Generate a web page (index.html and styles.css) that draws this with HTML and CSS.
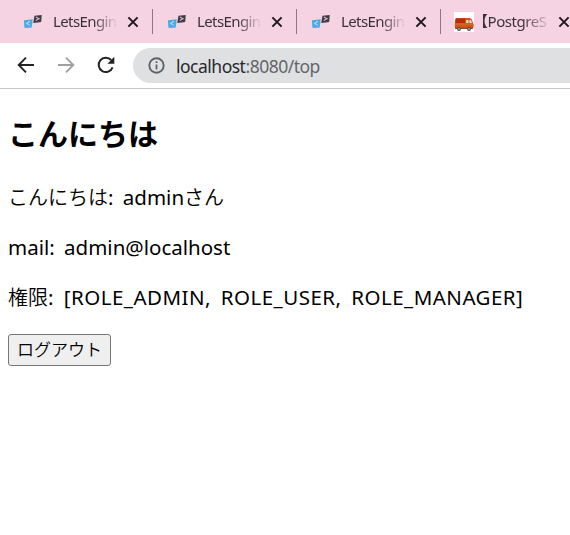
FILE: index.html
```html
<!DOCTYPE html>
<html lang="ja">
<head>
<meta charset="utf-8">
<title>こんにちは</title>
<link rel="stylesheet" href="styles.css">
</head>
<body>
<svg width="0" height="0" class="defs">
  <symbol id="fav" viewBox="0 0 18 14">
    <path d="M0 5.2 8.7 4.2 7.7 12.4 1.6 13Q.3 13 .3 11.7Z" fill="#49a9e6"/>
    <path d="M5.8 6.2 2.8 8.5 5.8 10.4" fill="none" stroke="#b5dffa" stroke-width="1.1"/>
    <path d="M10.5.7 17.7 0 17.3 6.2Q17.2 7.2 16 7.3L9.2 8Z" fill="#453b44"/>
    <path d="M12 2 15 3.7 11.8 5.4" fill="none" stroke="#c9bcc6" stroke-width="1.1"/>
  </symbol>
  <symbol id="close" viewBox="0 0 12 12">
    <path d="M1.4 1.4 10.6 10.6M10.6 1.4 1.4 10.6" stroke="#1d191c" stroke-width="2"/>
  </symbol>
</svg>
<div class="tabs">
  <div class="tab"><svg class="fav"><use href="#fav"/></svg><span class="title"><span class="t-eng">LetsEngin</span></span><svg class="close"><use href="#close"/></svg></div>
  <div class="tab"><svg class="fav"><use href="#fav"/></svg><span class="title"><span class="t-eng">LetsEngin</span></span><svg class="close"><use href="#close"/></svg></div>
  <div class="tab"><svg class="fav"><use href="#fav"/></svg><span class="title"><span class="t-eng">LetsEngin</span></span><svg class="close"><use href="#close"/></svg></div>
  <div class="tab last">
    <svg class="van" viewBox="0 0 20 20"><rect width="20" height="20" fill="#fff"/><path d="M1 8Q1 6 3 6H15.5Q17.4 6 18 8L19 11Q20 12 19.6 15.5L18 16.8H1.5L.6 15Z" fill="#cf541f"/><path d="M2 6.6H11V11H1.5Z" fill="#bd2a0b"/><path d="M12.2 8H14.5V11H12.2ZM15.5 8H17L18 11H15.5Z" fill="#f4dfcd"/><path d="M.7 12.2H19.5" stroke="#d8702b"/><path d="M1 16.3H19" stroke="#83421b"/><circle cx="5" cy="17" r="2" fill="#5b4b48"/><circle cx="15" cy="17" r="2" fill="#5b4b48"/><circle cx="5" cy="17" r=".8" fill="#ddd"/><circle cx="15" cy="17" r=".8" fill="#ddd"/></svg>
    <span class="title wide"><span class="t-pg">【PostgreS</span></span><svg class="close"><use href="#close"/></svg>
  </div>
</div>
<div class="toolbar">
  <svg class="nav" viewBox="0 0 18 18"><path d="M17 9H2M9 1.7 1.7 9 9 16.3" fill="none" stroke="#222" stroke-width="1.9"/></svg>
  <svg class="nav" viewBox="0 0 18 18"><path d="M1 9H16M9 1.7 16.3 9 9 16.3" fill="none" stroke="#a0a0a0" stroke-width="1.9"/></svg>
  <svg class="nav" viewBox="0 0 18 18"><path d="M15.6 11.4A7.2 7.2 0 1 1 14.2 4" fill="none" stroke="#222" stroke-width="2"/><path d="M17.3.8V7.7H10.4Z" fill="#222"/></svg>
  <div class="omnibox">
    <svg class="info" viewBox="0 0 17 17"><circle cx="8.5" cy="8.5" r="7.2" fill="none" stroke="#5f6368" stroke-width="1.9"/><path d="M8.5 7.4V12.6M8.5 4.3V6.1" stroke="#5f6368" stroke-width="1.8"/></svg>
    <span class="url"><span class="host">localhost</span>:8080/top</span>
  </div>
</div>
<main>
  <h1>こんにちは</h1>
  <p>こんにちは<span class="latin">: admin</span>さん</p>
  <p><span class="latin">mail: admin@localhost</span></p>
  <p>権限<span class="latin roles">: [ROLE_ADMIN, ROLE_USER, ROLE_MANAGER]</span></p>
  <button type="button">ログアウト</button>
</main>
</body>
</html>
```
FILE: styles.css
```css
* { box-sizing: border-box; }
body {
  margin: 0;
  height: 535px;
  overflow: hidden;
  background: #fff;
  color: #000;
  font-family: "Noto Sans", "Noto Sans CJK JP", sans-serif;
}
svg { display: block; flex: none; }
.defs { position: absolute; }
.tabs {
  display: flex;
  align-items: center;
  height: 43px;
  padding-left: 9px;
  background: #f5d3e3;
}
.tab {
  display: flex;
  flex: none;
  align-items: center;
  width: 144px;
  height: 25px;
  padding-left: 15px;
  border-right: 1px solid #8d7782;
}
.tab.last { border: 0; padding-left: 13px; }
.fav { width: 18px; height: 14px; }
.van { width: 20px; height: 20px; }
.title {
  width: 65px;
  margin-left: 11px;
  white-space: nowrap;
  font-size: 15px;
  line-height: 27px;
  color: #3b3138;
  -webkit-mask-image: linear-gradient(90deg, #000 62%, transparent);
  mask-image: linear-gradient(90deg, #000 62%, transparent);
}
.title.wide { width: 79px; margin-left: -1px; }
.t-eng { letter-spacing: -0.6px; }
.t-pg { letter-spacing: -0.45px; }
.close { width: 12px; height: 12px; margin-left: 9px; }
.last .close { margin-left: 6px; }
.toolbar {
  display: flex;
  align-items: center;
  gap: 22px;
  height: 46px;
  padding-left: 17px;
  border-bottom: 1px solid #c6c6c8;
}
.nav { width: 18px; height: 18px; margin-top: -2px; }
.omnibox {
  display: flex;
  flex: 1;
  align-items: center;
  height: 35px;
  margin-left: -4px;
  padding-left: 15px;
  border-radius: 18px 0 0 18px;
  background: #dfe0e2;
}
.info { width: 17px; height: 17px; }
.url {
  margin-left: 11px;
  font-size: 17.5px;
  line-height: 30px;
  letter-spacing: -0.5px;
  color: #62666b;
}
.host { color: #27292c; }
main { padding: 27px 8px 0; }
h1 {
  margin: 0;
  font-size: 30px;
  line-height: 36px;
  font-weight: 700;
}
p {
  margin: 0;
  padding-top: 20px;
  font-size: 20px;
  line-height: 30px;
  font-weight: 350;
  white-space: nowrap;
}
h1 + p { padding-top: 31px; }
.latin {
  font-weight: 400;
  font-size: 20.5px;
  line-height: 20px;
  word-spacing: 4px;
}
.roles { letter-spacing: 0.48px; }
button {
  display: block;
  width: 103px;
  height: 32px;
  margin-top: 21px;
  padding: 0 0 2px;
  border: 1px solid #767676;
  border-radius: 3px;
  background: #efefef;
  color: #000;
  font: 350 17px/28px "Noto Sans CJK JP", sans-serif;
}
```
